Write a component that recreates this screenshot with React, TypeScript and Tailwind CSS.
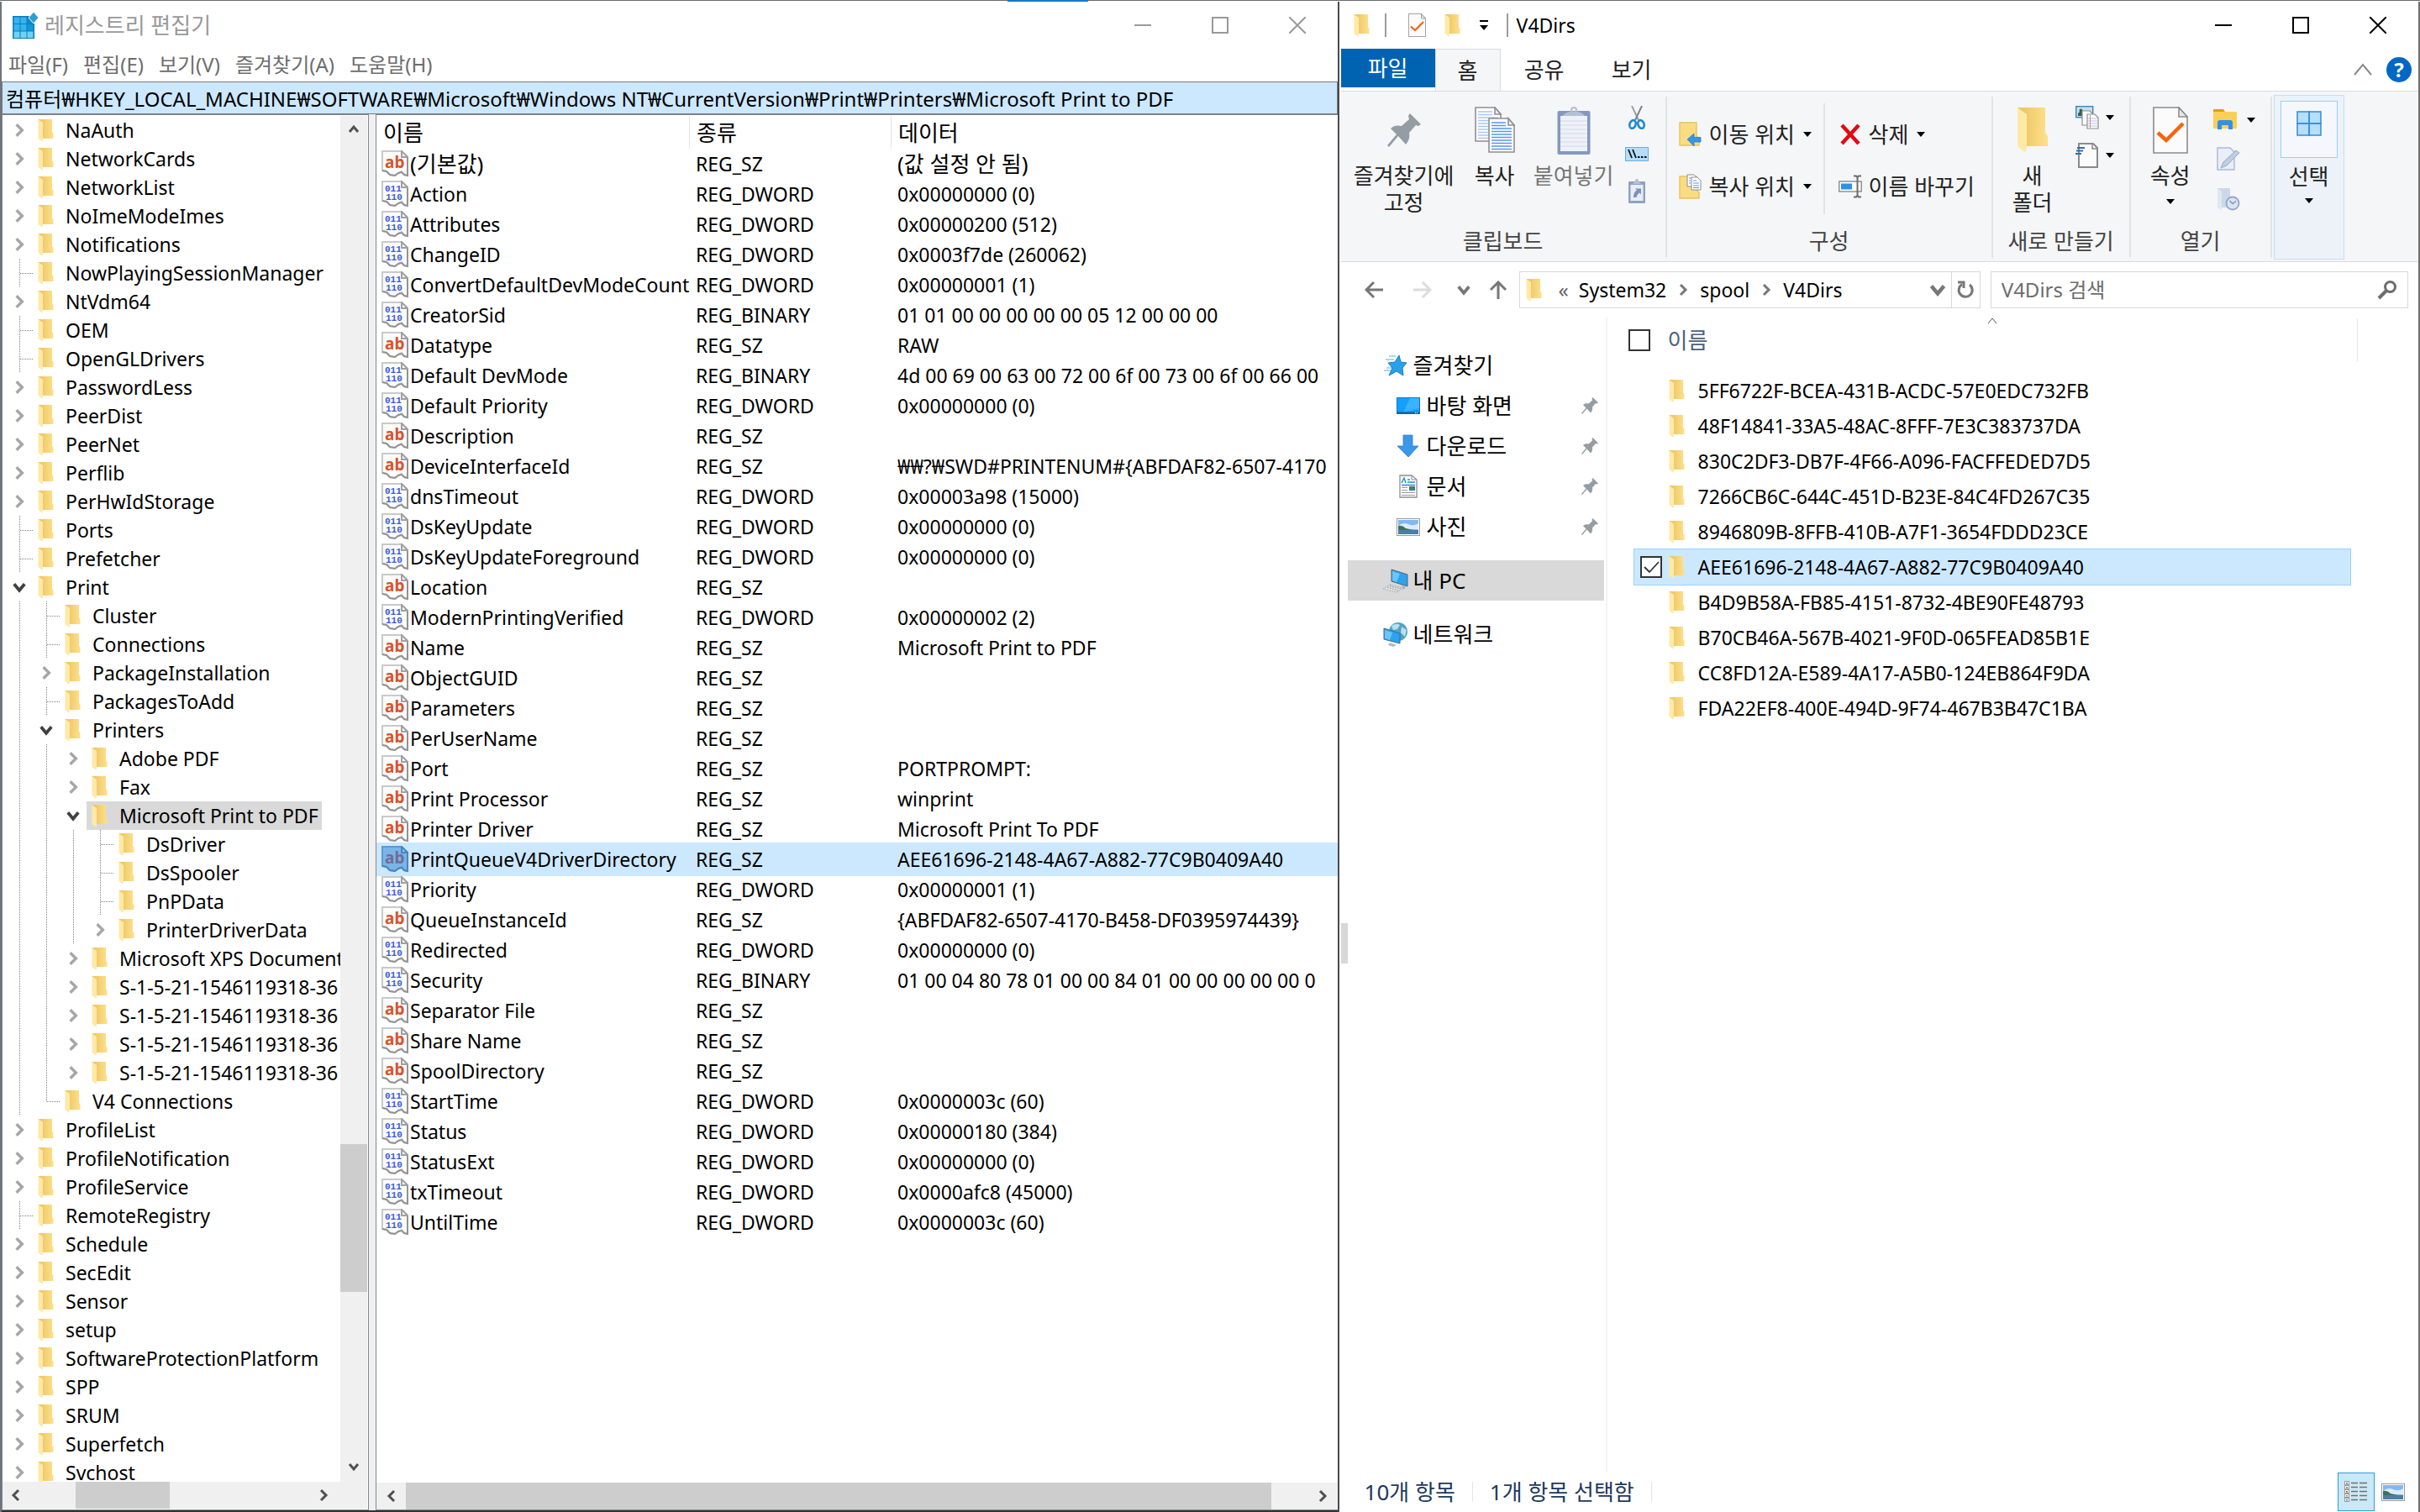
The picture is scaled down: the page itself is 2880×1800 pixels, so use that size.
import React from "react";

/* ---------- shared glyphs ---------- */

const FolderIcon = ({ className = "w-[19px] h-[27px]" }: { className?: string }) => (
  <svg viewBox="0 0 38 54" className={"shrink-0 " + className} aria-hidden="true" preserveAspectRatio="none">
    <defs>
      <linearGradient id="fold" x1="0" y1="0" x2="1" y2="0">
        <stop offset="0" stopColor="#e9c25f" />
        <stop offset="1" stopColor="#ffe08a" />
      </linearGradient>
    </defs>
    <path d="M1 0H34V30L37 34V46H12L4 8Z" fill="url(#fold)" />
    <path d="M1 0L12 8V46L11 54L1 46Z" fill="#ffe9a6" />
  </svg>
);

const Caret = ({ className = "" }: { className?: string }) => (
  <svg viewBox="0 0 10 6" className={"w-2.5 h-1.5 shrink-0 " + className} aria-hidden="true">
    <path d="M0 0H10L5 6Z" fill="#000" />
  </svg>
);

const Chevron = ({ dir, className = "w-4 h-4", color = "#505050", w = 3 }: { dir: "up" | "down" | "left" | "right"; className?: string; color?: string; w?: number }) => {
  const d = {
    up: "M3 11L8 5L13 11",
    down: "M3 5L8 11L13 5",
    left: "M11 2L5 8L11 14",
    right: "M5 2L11 8L5 14",
  }[dir];
  return (
    <svg viewBox="0 0 16 16" className={"shrink-0 " + className} aria-hidden="true">
      <path d={d} fill="none" stroke={color} strokeWidth={w} />
    </svg>
  );
};

const PinIcon = ({ className }: { className: string }) => (
  <svg viewBox="0 0 40 40" className={"shrink-0 " + className} aria-hidden="true">
    <path d="M27 0L40 13L37 15L34 14L26 23C27 28 26 32 22 37L13 27L2 40L0 38L11 25L4 18C8 14 12 14 17 15L26 7L25 3Z" fill="#949da3" />
  </svg>
);

const WindowButtons = ({ color }: { color: string }) => (
  <div className="flex items-center pr-0.5">
    {[
      ["최소화", <path key="a" d="M0 10H20" />],
      ["최대화", <path key="b" d="M1 1H19V19H1Z" />],
      ["닫기", <path key="c" d="M0 0L20 20M20 0L0 20" />],
    ].map(([label, shape]) => (
      <button key={label as string} aria-label={label as string} className="flex h-14 w-[92px] items-center justify-center">
        <svg viewBox="0 0 20 20" className="h-5 w-5" fill="none" stroke={color} strokeWidth={2}>
          {shape}
        </svg>
      </button>
    ))}
  </div>
);

/* ---------- registry editor ---------- */

type Node = { n: string; d: number; s: "+" | "-" | ""; last?: boolean };

const tree: Node[] = [
  { n: "NaAuth", d: 0, s: "+" },
  { n: "NetworkCards", d: 0, s: "+" },
  { n: "NetworkList", d: 0, s: "+" },
  { n: "NoImeModeImes", d: 0, s: "+" },
  { n: "Notifications", d: 0, s: "+" },
  { n: "NowPlayingSessionManager", d: 0, s: "" },
  { n: "NtVdm64", d: 0, s: "+" },
  { n: "OEM", d: 0, s: "" },
  { n: "OpenGLDrivers", d: 0, s: "" },
  { n: "PasswordLess", d: 0, s: "+" },
  { n: "PeerDist", d: 0, s: "+" },
  { n: "PeerNet", d: 0, s: "+" },
  { n: "Perflib", d: 0, s: "+" },
  { n: "PerHwIdStorage", d: 0, s: "+" },
  { n: "Ports", d: 0, s: "" },
  { n: "Prefetcher", d: 0, s: "" },
  { n: "Print", d: 0, s: "-" },
  { n: "Cluster", d: 1, s: "" },
  { n: "Connections", d: 1, s: "" },
  { n: "PackageInstallation", d: 1, s: "+" },
  { n: "PackagesToAdd", d: 1, s: "" },
  { n: "Printers", d: 1, s: "-" },
  { n: "Adobe PDF", d: 2, s: "+" },
  { n: "Fax", d: 2, s: "+" },
  { n: "Microsoft Print to PDF", d: 2, s: "-" },
  { n: "DsDriver", d: 3, s: "" },
  { n: "DsSpooler", d: 3, s: "" },
  { n: "PnPData", d: 3, s: "" },
  { n: "PrinterDriverData", d: 3, s: "+", last: true },
  { n: "Microsoft XPS Document", d: 2, s: "+" },
  { n: "S-1-5-21-1546119318-36", d: 2, s: "+" },
  { n: "S-1-5-21-1546119318-36", d: 2, s: "+" },
  { n: "S-1-5-21-1546119318-36", d: 2, s: "+" },
  { n: "S-1-5-21-1546119318-36", d: 2, s: "+", last: true },
  { n: "V4 Connections", d: 1, s: "", last: true },
  { n: "ProfileList", d: 0, s: "+" },
  { n: "ProfileNotification", d: 0, s: "+" },
  { n: "ProfileService", d: 0, s: "+" },
  { n: "RemoteRegistry", d: 0, s: "" },
  { n: "Schedule", d: 0, s: "+" },
  { n: "SecEdit", d: 0, s: "+" },
  { n: "Sensor", d: 0, s: "+" },
  { n: "setup", d: 0, s: "+" },
  { n: "SoftwareProtectionPlatform", d: 0, s: "+" },
  { n: "SPP", d: 0, s: "+" },
  { n: "SRUM", d: 0, s: "+" },
  { n: "Superfetch", d: 0, s: "+" },
  { n: "Svchost", d: 0, s: "+" },
];

const TreeGuide = ({ end, branch }: { end?: boolean; branch?: boolean }) => (
  <svg viewBox="0 0 32 34" className="h-[34px] w-8 shrink-0" aria-hidden="true">
    <path d={end ? "M16.5 0V17" : "M16.5 0V34"} stroke="#808080" strokeDasharray="1 1" fill="none" />
    {branch && <path d="M17 17.5H32" stroke="#808080" strokeDasharray="1 1" fill="none" />}
  </svg>
);

const TreeRow = ({ node }: { node: Node }) => {
  const selected = node.n === "Microsoft Print to PDF";
  return (
    <li className="flex h-[34px] shrink-0 items-center pl-1">
      {Array.from({ length: node.d }, (_, i) => (
        <TreeGuide key={i} />
      ))}
      {node.s === "" ? (
        <TreeGuide end={node.last} branch />
      ) : (
        <button aria-label={node.n + (node.s === "+" ? " 펼치기" : " 접기")} className="flex h-[34px] w-8 shrink-0 items-center justify-center">
          {node.s === "+" ? (
            <Chevron dir="right" className="h-[18px] w-[18px]" color="#a6a6a6" w={3} />
          ) : (
            <Chevron dir="down" className="h-[20px] w-[20px]" color="#404040" w={3} />
          )}
        </button>
      )}
      <div className={"flex h-[34px] items-center gap-3.5 pl-1.5 pr-1 " + (selected ? "bg-[#d9d9d9]" : "")}>
        <FolderIcon />
        <span className="whitespace-nowrap">{node.n}</span>
      </div>
    </li>
  );
};

const SZ = "REG_SZ";
const DW = "REG_DWORD";
const BN = "REG_BINARY";
const values: [string, string, string][] = [
  ["(기본값)", SZ, "(값 설정 안 됨)"],
  ["Action", DW, "0x00000000 (0)"],
  ["Attributes", DW, "0x00000200 (512)"],
  ["ChangeID", DW, "0x0003f7de (260062)"],
  ["ConvertDefaultDevModeCount", DW, "0x00000001 (1)"],
  ["CreatorSid", BN, "01 01 00 00 00 00 00 05 12 00 00 00"],
  ["Datatype", SZ, "RAW"],
  ["Default DevMode", BN, "4d 00 69 00 63 00 72 00 6f 00 73 00 6f 00 66 00"],
  ["Default Priority", DW, "0x00000000 (0)"],
  ["Description", SZ, ""],
  ["DeviceInterfaceId", SZ, "₩₩?₩SWD#PRINTENUM#{ABFDAF82-6507-4170"],
  ["dnsTimeout", DW, "0x00003a98 (15000)"],
  ["DsKeyUpdate", DW, "0x00000000 (0)"],
  ["DsKeyUpdateForeground", DW, "0x00000000 (0)"],
  ["Location", SZ, ""],
  ["ModernPrintingVerified", DW, "0x00000002 (2)"],
  ["Name", SZ, "Microsoft Print to PDF"],
  ["ObjectGUID", SZ, ""],
  ["Parameters", SZ, ""],
  ["PerUserName", SZ, ""],
  ["Port", SZ, "PORTPROMPT:"],
  ["Print Processor", SZ, "winprint"],
  ["Printer Driver", SZ, "Microsoft Print To PDF"],
  ["PrintQueueV4DriverDirectory", SZ, "AEE61696-2148-4A67-A882-77C9B0409A40"],
  ["Priority", DW, "0x00000001 (1)"],
  ["QueueInstanceId", SZ, "{ABFDAF82-6507-4170-B458-DF0395974439}"],
  ["Redirected", DW, "0x00000000 (0)"],
  ["Security", BN, "01 00 04 80 78 01 00 00 84 01 00 00 00 00 00 0"],
  ["Separator File", SZ, ""],
  ["Share Name", SZ, ""],
  ["SpoolDirectory", SZ, ""],
  ["StartTime", DW, "0x0000003c (60)"],
  ["Status", DW, "0x00000180 (384)"],
  ["StatusExt", DW, "0x00000000 (0)"],
  ["txTimeout", DW, "0x0000afc8 (45000)"],
  ["UntilTime", DW, "0x0000003c (60)"],
];

const ValueIcon = ({ text, selected }: { text: boolean; selected: boolean }) => (
  <svg viewBox="0 0 32 32" className="h-8 w-8 shrink-0" aria-hidden="true">
    <path
      d="M1 1H24L31 8V30L27 29L24 25L20 27L16 30L10 29L6 25L1 24Z"
      fill={selected ? "#7ab5e8" : "#fcfcfc"}
      stroke={selected ? "#5b9bd0" : "#c9c9c9"}
      strokeWidth="2"
    />
    <path d="M31 8V30L27 29L24 26L20 27L16 30L10 29L6 25L1 24" fill="none" stroke={selected ? "#4a86bd" : "#939393"} strokeWidth="2" />
    <path d="M24 1V8H31Z" fill={selected ? "#8cc2ee" : "#fff"} stroke={selected ? "#4a86bd" : "#a0a0a0"} strokeWidth="2" />
    {text ? (
      <text x="4" y="21" fontSize="19" fontWeight="700" fontFamily="Noto Sans, sans-serif" fill={selected ? "#6f6d93" : "#d9532c"}>
        ab
      </text>
    ) : (
      <g fontFamily="Liberation Mono, monospace" fontSize="11" fontWeight="700" fill="#3a5bd9">
        <text x="4" y="13">011</text>
        <text x="5" y="23">110</text>
      </g>
    )}
  </svg>
);

const RegIcon = () => (
  <svg viewBox="0 0 32 32" className="h-8 w-8 shrink-0" aria-hidden="true">
    <rect x="0" y="5" width="26" height="27" fill="#0c7bb8" />
    {[0, 1, 2].map((r) =>
      [0, 1, 2].map((c) => (
        <rect key={r + "-" + c} x={1.5 + c * 8} y={6.5 + r * 8.5} width="7" height="7.5" fill={r === 0 && c === 2 ? "#1489c4" : r === 2 ? "#6fd0f7" : c === 2 ? "#0f9ad8" : "#35b3ee"} />
      )),
    )}
    <path d="M25 0L31 7L25 14L19 7Z" fill="#2f9fd2" stroke="#fff" strokeWidth="1" />
  </svg>
);

const RegistryEditor = () => (
  <section className="flex min-w-0 flex-[1594] flex-col border-l-2 border-r-2 border-l-[#6f747c] border-r-[#4a4a50] bg-white">
    <header className="flex h-[55px] shrink-0 items-center pl-[13px]">
      <RegIcon />
      <h1 className="ml-1.5 flex-1 text-[26px] text-[#999]">레지스트리 편집기</h1>
      <WindowButtons color="#999999" />
    </header>
    <nav className="flex h-10 shrink-0 items-center gap-[18px] px-2 text-[24px] text-[#6d6d6d]">
      {["파일(F)", "편집(E)", "보기(V)", "즐겨찾기(A)", "도움말(H)"].map((m) => (
        <button key={m}>{m}</button>
      ))}
    </nav>
    <input
      aria-label="주소"
      readOnly
      className="h-[39px] shrink-0 border border-[#7a7a7a] bg-[#cce8ff] px-1 text-[24px] outline-none"
      value="컴퓨터₩HKEY_LOCAL_MACHINE₩SOFTWARE₩Microsoft₩Windows NT₩CurrentVersion₩Print₩Printers₩Microsoft Print to PDF"
    />
    <div className="flex min-h-0 flex-1 gap-2 bg-[#f0f0f0]">
      {/* key tree */}
      <div className="flex w-[437px] shrink-0 flex-col border border-[#828790] bg-white pb-px pr-px pt-px">
        <div className="flex min-h-0 flex-1">
          <ul className="flex min-w-0 flex-1 flex-col overflow-hidden">
            {tree.map((t, i) => (
              <TreeRow key={i} node={t} />
            ))}
          </ul>
          <div className="flex w-8 shrink-0 flex-col items-center justify-between bg-[#f0f0f0]">
            <button aria-label="위로" className="flex h-8 w-8 items-center justify-center">
              <Chevron dir="up" />
            </button>
            <div className="flex w-full flex-1 flex-col">
              <div className="flex-[1194]" />
              <div className="flex-[176] bg-[#cdcdcd]" />
              <div className="flex-[190]" />
            </div>
            <button aria-label="아래로" className="flex h-9 w-8 items-center justify-center">
              <Chevron dir="down" />
            </button>
          </div>
        </div>
        <div className="flex h-8 shrink-0 bg-[#f0f0f0] pr-9">
          <button aria-label="왼쪽으로" className="flex h-8 w-8 items-center justify-center">
            <Chevron dir="left" />
          </button>
          <div className="flex flex-1">
            <div className="flex-[55]" />
            <div className="flex-[112] bg-[#cdcdcd]" />
            <div className="flex-[168]" />
          </div>
          <button aria-label="오른쪽으로" className="flex h-8 w-8 items-center justify-center">
            <Chevron dir="right" />
          </button>
        </div>
      </div>
      {/* value list */}
      <div className="flex min-w-0 flex-1 flex-col border-y border-l border-[#828790] bg-white pt-px">
        <div className="min-h-0 flex-1 overflow-hidden">
          <table className="w-full table-fixed border-separate border-spacing-0 text-left">
            <colgroup>
              <col className="w-[373px]" />
              <col className="w-[240px]" />
              <col />
            </colgroup>
            <thead>
              <tr className="h-[39px] text-[26px]">
                <th className="border-r border-[#e5e5e5] py-0 pl-2 font-normal">이름</th>
                <th className="border-r border-[#e5e5e5] py-0 pl-2 font-normal">종류</th>
                <th className="py-0 pl-2 font-normal">데이터</th>
              </tr>
            </thead>
            <tbody>
              {values.map(([name, type, data], i) => {
                const sel = name === "PrintQueueV4DriverDirectory";
                const bg = sel ? "bg-[#cce8ff] shadow-[0_2px_0_#cce8ff,0_-2px_0_#cce8ff]" : "";
                const ko = i === 0 ? "text-[26px]" : "";
                return (
                  <tr key={name} className="h-9">
                    <td className={"p-0 " + bg}>
                      <div className="flex h-9 items-center whitespace-nowrap pl-1.5">
                        <ValueIcon text={type === SZ} selected={sel} />
                        <span className={"ml-0.5 " + ko}>{name}</span>
                      </div>
                    </td>
                    <td className={"p-0 pl-[7px] " + bg}>{type}</td>
                    <td className={"overflow-hidden whitespace-nowrap p-0 pl-[7px] " + bg + ko}>{data}</td>
                  </tr>
                );
              })}
            </tbody>
          </table>
        </div>
        <div className="flex h-8 shrink-0 bg-[#f0f0f0]">
          <button aria-label="왼쪽으로" className="flex h-8 w-[35px] items-center justify-center">
            <Chevron dir="left" />
          </button>
          <div className="flex flex-1">
            <div className="flex-[1029] bg-[#cdcdcd]" />
            <div className="flex-[43]" />
          </div>
          <button aria-label="오른쪽으로" className="flex h-8 w-9 items-center justify-center">
            <Chevron dir="right" />
          </button>
        </div>
      </div>
    </div>
    <div className="h-0.5 shrink-0 bg-[#333]" />
  </section>
);

/* ---------- explorer icons ---------- */

const PropsIcon = ({ className }: { className: string }) => (
  <svg viewBox="0 0 42 56" className={"shrink-0 " + className} aria-hidden="true">
    <path d="M1 1H31L41 12V55H1Z" fill="#fbfbfb" stroke="#8c8c8c" strokeWidth="1.6" />
    <path d="M31 1V12H41Z" fill="#e8e8e8" stroke="#8c8c8c" strokeWidth="1.6" />
    <path d="M6 31L16 40L36 20" fill="none" stroke="#f7630c" strokeWidth="4.5" />
  </svg>
);

const Page = ({ x, y, faded }: { x: number; y: number; faded?: boolean }) => (
  <g transform={`translate(${x} ${y})`}>
    <path d="M1 1H24L31 9V41H1Z" fill="#fff" stroke="#8f8f8f" strokeWidth="1.6" />
    <path d="M24 1V9H31Z" fill="#eee" stroke="#8f8f8f" strokeWidth="1.6" />
    <path
      d="M4 6H21M4 9.5H21M4 13H28M4 16.5H28M4 20H28M4 23.5H28M4 27H28M4 30.5H28M4 34H28M4 37.5H28"
      stroke={faded ? "#a9c6f5" : "#5a94ee"}
      strokeWidth="1.5"
    />
  </g>
);

const CopyIcon = () => (
  <svg viewBox="0 0 48 56" className="h-14 w-12" aria-hidden="true">
    <Page x={0} y={0} faded />
    <Page x={16} y={13} />
  </svg>
);

const PasteIcon = () => (
  <svg viewBox="0 0 40 57" className="h-[57px] w-10" aria-hidden="true">
    <rect x="0.5" y="5" width="39" height="52" rx="2" fill="#8498bd" />
    <rect x="4" y="11" width="32" height="42" fill="#eef1f8" />
    <path d="M4 17H36M4 22H36M4 27H36M4 32H36M4 37H36M4 42H36M4 47H36" stroke="#d2d9e8" strokeWidth="1.2" />
    <path d="M7 11C9 7 13 7 15 6H25C27 7 31 7 33 11Z" fill="#b4bfd6" />
    <circle cx="20" cy="4" r="3" fill="none" stroke="#b4bfd6" strokeWidth="2" />
  </svg>
);

const ScissorsIcon = () => (
  <svg viewBox="0 0 20 28" className="h-7 w-5" aria-hidden="true" fill="none">
    <path d="M4 0L12 17" stroke="#9a9fa3" strokeWidth="2" />
    <path d="M16 0L8 17" stroke="#7e8386" strokeWidth="2" />
    <ellipse cx="5" cy="22" rx="3.5" ry="5" stroke="#1e8ad0" strokeWidth="2.6" transform="rotate(20 5 22)" />
    <ellipse cx="15" cy="22" rx="3.5" ry="5" stroke="#1e8ad0" strokeWidth="2.6" transform="rotate(-20 15 22)" />
  </svg>
);

const CopyPathIcon = () => (
  <svg viewBox="0 0 28 17" className="h-[17px] w-7" aria-hidden="true">
    <rect x="0.5" y="0.5" width="27" height="16" fill="#b5ddfb" stroke="#6ab0dd" />
    <path d="M4 3L8 13M9 3L13 13" stroke="#111" strokeWidth="1.8" />
    <path d="M15 12H17.500M19 12H21.500M23 12H25.500" stroke="#111" strokeWidth="2.200" />
  </svg>
);

const PasteShortcutIcon = () => (
  <svg viewBox="0 0 20 29" className="h-[29px] w-5" aria-hidden="true">
    <rect x="0" y="3" width="20" height="26" rx="1" fill="#8fa1c4" />
    <rect x="2.500" y="7" width="15" height="19" fill="#e8edf6" />
    <path d="M5 6C6 4 8 3 8 2A2 2 0 0 1 12 2C12 3 14 4 15 6Z" fill="#b4bfd6" />
    <path d="M6 22C6 17 8 14.500 10 13.500L8 11.500H15V18.500L13 16.500C11 18 10 20 9.500 22Z" fill="#7c92bd" />
  </svg>
);

const MoveToIcon = () => (
  <svg viewBox="0 0 28 30" className="h-[30px] w-7 shrink-0" aria-hidden="true">
    <path d="M1 1H21V17L24 20V28H1Z" fill="#fbdc82" stroke="#e6c35c" strokeWidth="1.400" />
    <path d="M10 21L18 14V18.500H26V24H18V29Z" fill="#3795e5" stroke="#2a7fc9" strokeWidth="0.800" />
  </svg>
);

const CopyToIcon = () => (
  <svg viewBox="0 0 28 30" className="h-[30px] w-7 shrink-0" aria-hidden="true">
    <path d="M1 3H21V19L24 22V29H1Z" fill="#fbdc82" stroke="#e6c35c" strokeWidth="1.400" />
    <path d="M10 1H18L21 4V15H10Z" fill="#fff" stroke="#8c8c8c" />
    <path d="M15 4H22L26 8V19H15Z" fill="#fff" stroke="#8c8c8c" />
    <path d="M12 5H15M12 8H14M12 11H14M17 8H21M17 11H24M17 14H24M17 16.500H24" stroke="#5a94ee" />
  </svg>
);

const DeleteIcon = () => (
  <svg viewBox="0 0 28 28" className="h-7 w-7 shrink-0" aria-hidden="true">
    <path d="M4 3L24 25M24 3L4 25" stroke="#e00b14" strokeWidth="4.500" />
  </svg>
);

const RenameIcon = () => (
  <svg viewBox="0 0 28 28" className="h-7 w-7 shrink-0" aria-hidden="true">
    <rect x="0.700" y="8" width="26.500" height="12" fill="#fff" stroke="#8a8a8a" strokeWidth="1.400" />
    <rect x="3" y="10.500" width="13" height="7" fill="#2f91e6" />
    <path d="M18 1.500H21L22.500 3L24 1.500H27M22.500 3V25M18 26.500H21L22.500 25L24 26.500H27" fill="none" stroke="#6a6a6a" strokeWidth="2" />
  </svg>
);

const NewItemIcon = () => (
  <svg viewBox="0 0 28 28" className="h-7 w-7 shrink-0" aria-hidden="true">
    <rect x="0.700" y="0.700" width="20" height="13" fill="#bfe0f5" stroke="#3a88b5" strokeWidth="1.400" />
    <path d="M3 12V9L5 7A2 2 0 1 1 8 7L10 9V12Z" fill="#3d5a45" />
    <path d="M8 6H17L20 9V23H8Z" fill="#fff" stroke="#8c8c8c" strokeWidth="1.200" />
    <path d="M14 10H23L27 14V27H14Z" fill="#fff" stroke="#8c8c8c" strokeWidth="1.200" />
    <path d="M15 15H26M15 18H26M15 21H26M15 24H26" stroke="#a8c6ee" />
    <path d="M17.500 11V26" stroke="#ef7d7d" />
  </svg>
);

const EasyAccessIcon = () => (
  <svg viewBox="0 0 28 30" className="h-[30px] w-7 shrink-0" aria-hidden="true">
    <path d="M4 1H21L26 6V29H4Z" fill="#fbfbfb" stroke="#8a8a8a" strokeWidth="2" />
    <path d="M20 1V7H26" fill="none" stroke="#8a8a8a" strokeWidth="1.500" />
    <path d="M2 6H11M1 9.500H9M0 13H7" stroke="#2f6fb5" strokeWidth="2" />
  </svg>
);

const OpenIcon = () => (
  <svg viewBox="0 0 28 25" className="h-[25px] w-7 shrink-0" aria-hidden="true">
    <path d="M0 0H12L14 3H0Z" fill="#dda012" />
    <path d="M0 3H28V23H0Z" fill="#fbcf57" />
    <path d="M5 24V16Q5 13 8 13H20Q23 13 23 16V24H18V19H10V24Z" fill="#3191e4" />
  </svg>
);

const EditIcon = () => (
  <svg viewBox="0 0 28 28" className="h-7 w-7 shrink-0" aria-hidden="true">
    <path d="M1 1H16L21 6V27H1Z" fill="#e9eef8" stroke="#a9b9d6" strokeWidth="1.400" />
    <path d="M5 25L8 18L23 4L27 7L12 22Z" fill="#c0cce2" stroke="#97a8ca" />
  </svg>
);

const HistoryIcon = () => (
  <svg viewBox="0 0 28 28" className="h-7 w-7 shrink-0" aria-hidden="true">
    <path d="M1 1H16V24H6Z" fill="#ccd7ea" />
    <path d="M1 1L6 5V27L1 24Z" fill="#e0e7f3" />
    <circle cx="19" cy="19" r="7.500" fill="#dbe3f1" stroke="#93a6c9" strokeWidth="1.800" />
    <path d="M15.500 16L19 19.500L23 16.500" fill="none" stroke="#7f94bd" strokeWidth="1.500" />
  </svg>
);

const SelectIcon = () => (
  <svg viewBox="0 0 30 30" className="h-[30px] w-[30px]" aria-hidden="true">
    <rect x="1" y="1" width="28" height="28" fill="#b5dffc" stroke="#3d92d4" strokeWidth="1.600" />
    <path d="M15 0V30M0 15H30" stroke="#3d92d4" strokeWidth="2" />
  </svg>
);

const PictureIcon = () => (
  <svg viewBox="0 0 28 21" className="h-[21px] w-7 shrink-0" aria-hidden="true">
    <rect x="0.500" y="0.500" width="27" height="20" fill="#fff" stroke="#9a9a9a" />
    <rect x="2" y="2" width="24" height="17" fill="#7fb9f5" />
    <path d="M2 9Q8 4 14 7T26 6V13H2Z" fill="#dcecf9" />
    <path d="M2 9Q7 8 11 12L20 14H2Z" fill="#3f7257" />
    <rect x="2" y="14" width="24" height="5" fill="#4a7fa6" />
  </svg>
);

const StarIcon = () => (
  <svg viewBox="0 0 30 30" className="h-[30px] w-[30px] shrink-0" aria-hidden="true">
    <path d="M7 4H15M3 8H13M4 18H10M1 21H9" stroke="#8cc9ee" strokeWidth="1.400" />
    <path d="M19 3L21 11L28 12L23 18L24 27L16 22L7 27L11 18L6 12L14 11Z" fill="#2aa0ec" stroke="#1580c8" />
  </svg>
);

const DesktopIcon = () => (
  <svg viewBox="0 0 28 20" className="h-5 w-7 shrink-0" aria-hidden="true">
    <rect x="0.500" y="0.500" width="27" height="19" fill="#12a0fc" stroke="#0e77c2" />
    <path d="M27 1V13L8 18L16 1Z" fill="#3bb2ff" />
    <path d="M1 18.500H27" stroke="#0b5fa5" strokeWidth="2" />
    <path d="M22 18.500H26" stroke="#fff" strokeDasharray="1 1" />
  </svg>
);

const DownloadIcon = () => (
  <svg viewBox="0 0 28 28" className="h-7 w-7 shrink-0" aria-hidden="true">
    <path d="M8 1H19V14H26L14 27L1 14H8Z" fill="#3b97e8" stroke="#2f80ca" strokeWidth="0.800" />
  </svg>
);

const DocIcon = () => (
  <svg viewBox="0 0 28 28" className="h-7 w-7 shrink-0" aria-hidden="true">
    <path d="M4 1H18L24 6V27H4Z" fill="#fff" stroke="#8f8f8f" strokeWidth="1.300" />
    <path d="M18 1V6H24" fill="none" stroke="#8f8f8f" />
    <path d="M6 10L9 4L11 10M13 6H16M13 9H22M6 12.500H22" fill="none" stroke="#1e8fd5" strokeWidth="1.400" />
    <path d="M6 15.500H13M6 18.500H13M6 21.500H22M6 24.500H22" stroke="#9a9a9a" />
    <rect x="15" y="14" width="7" height="5" fill="#3c7d8e" />
  </svg>
);

const PcIcon = () => (
  <svg viewBox="0 0 30 30" className="h-[30px] w-[30px] shrink-0" aria-hidden="true">
    <path d="M10 2L29 8V22L10 16Z" fill="#2ba4f0" stroke="#4d6478" />
    <path d="M11 4L20 7L16 17L11 15Z" fill="#6cc5fa" />
    <path d="M8 20L24 24L16 29L0 25Z" fill="#dfe3e6" stroke="#a7acb0" strokeDasharray="2 1" />
    <path d="M5 23L18 27M8 21.500L21 25" stroke="#8f9499" strokeDasharray="2 1" />
    <path d="M22 21L27 23L24 26Z" fill="#aab0b5" />
  </svg>
);

const NetIcon = () => (
  <svg viewBox="0 0 30 30" className="h-[30px] w-[30px] shrink-0" aria-hidden="true">
    <circle cx="18" cy="12" r="11" fill="#4fa3c9" />
    <path d="M10 5Q16 1 20 4L17 9L12 10ZM22 6L28 10L26 18L21 13Z" fill="#b9dfee" />
    <path d="M1 8L20 14V26L1 21Z" fill="#2ba4f0" stroke="#3d6b8c" />
    <path d="M2 10L11 13L8 22L2 20Z" fill="#6cc5fa" />
    <path d="M8 25L16 28L12 30L6 28Z" fill="#b4b9bd" />
  </svg>
);

/* ---------- explorer ---------- */

const Sep = ({ className = "my-0.5" }: { className?: string }) => <div className={"w-0.5 shrink-0 bg-[#e2e3e4] " + className} />;

const BigButton = ({ icon, lines, className = "", caret, muted }: { icon: React.ReactNode; lines: string[]; className?: string; caret?: boolean; muted?: boolean }) => (
  <button className={"flex shrink-0 flex-col items-center pt-3 " + className}>
    <span className="flex h-[60px] items-center justify-center">{icon}</span>
    <span className={"mt-2 flex flex-col whitespace-nowrap leading-8 " + (muted ? "text-[#767676]" : "text-[#222]")}>
      {lines.map((l) => (
        <span key={l}>{l}</span>
      ))}
    </span>
    {caret && <Caret className="mt-3" />}
  </button>
);

const Group = ({ label, width, children }: { label: string; width: string; children: React.ReactNode }) => (
  <div className={"flex shrink-0 flex-col " + width}>
    <div className="flex flex-1">{children}</div>
    <div className="h-[38px] text-center leading-8 text-[#444]">{label}</div>
  </div>
);

const SmallButton = ({ icon, text, caret }: { icon: React.ReactNode; text: string; caret?: boolean }) => (
  <button className="flex h-[62px] items-center whitespace-nowrap text-[#222]">
    {icon}
    <span className="ml-2">{text}</span>
    {caret && <Caret className="ml-2.5" />}
  </button>
);

const Ribbon = () => (
  <div className="flex h-[204px] shrink-0 border-y border-[#dadbdc] bg-[#f5f6f7] pb-0.5 pt-1 text-[26px]">
    <Group label="클립보드" width="w-[386px]">
      <BigButton className="ml-3 w-[126px]" icon={<PinIcon className="h-10 w-10" />} lines={["즐겨찾기에", "고정"]} />
      <BigButton className="w-[90px]" icon={<CopyIcon />} lines={["복사"]} />
      <BigButton className="w-[98px]" icon={<PasteIcon />} lines={["붙여넣기"]} muted />
      <div className="flex w-[52px] flex-col items-center gap-[21px] pt-[13px]">
        <button aria-label="잘라내기"><ScissorsIcon /></button>
        <button aria-label="경로 복사"><CopyPathIcon /></button>
        <button aria-label="바로 가기 붙여넣기"><PasteShortcutIcon /></button>
      </div>
    </Group>
    <Sep />
    <Group label="구성" width="w-[386px]">
      <div className="flex w-[186px] flex-col pl-3.5 pt-4">
        <SmallButton icon={<MoveToIcon />} text="이동 위치" caret />
        <SmallButton icon={<CopyToIcon />} text="복사 위치" caret />
      </div>
      <Sep className="mb-4 mt-2.5" />
      <div className="flex flex-col pl-4 pt-4">
        <SmallButton icon={<DeleteIcon />} text="삭제" caret />
        <SmallButton icon={<RenameIcon />} text="이름 바꾸기" />
      </div>
    </Group>
    <Sep />
    <Group label="새로 만들기" width="w-[162px]">
      <BigButton className="w-[94px]" icon={<FolderIcon className="h-[54px] w-[38px]" />} lines={["새", "폴더"]} />
      <div className="flex flex-col gap-4 pl-1 pt-[13px]">
        <button aria-label="새 항목" className="flex items-center gap-2"><NewItemIcon /><Caret /></button>
        <button aria-label="빠른 연결" className="flex items-center gap-2"><EasyAccessIcon /><Caret /></button>
      </div>
    </Group>
    <Sep />
    <Group label="열기" width="w-[166px]">
      <BigButton className="w-[94px]" icon={<PropsIcon className="h-14 w-[42px]" />} lines={["속성"]} caret />
      <div className="flex flex-col items-start gap-5 pl-1 pt-[17px]">
        <button aria-label="열기" className="flex items-center gap-3"><OpenIcon /><Caret /></button>
        <button aria-label="편집" className="pl-1"><EditIcon /></button>
        <button aria-label="히스토리" className="pl-1"><HistoryIcon /></button>
      </div>
    </Group>
    <Sep />
    <button className="ml-0.5 flex w-[84px] shrink-0 flex-col items-center border border-[#bfe0f7] bg-[#ecf2f7] pt-1.5">
      <span className="flex h-[68px] w-[68px] items-start justify-center border border-[#99cef8] bg-[#f4f8fc] pt-[11px]">
        <SelectIcon />
      </span>
      <span className="mt-1.5 leading-8 text-[#222]">선택</span>
      <Caret className="mt-2.5" />
    </button>
  </div>
);

const places: { n: string; icon: React.ReactNode }[] = [
  { n: "바탕 화면", icon: <DesktopIcon /> },
  { n: "다운로드", icon: <DownloadIcon /> },
  { n: "문서", icon: <DocIcon /> },
  { n: "사진", icon: <PictureIcon /> },
];

const folders = [
  "5FF6722F-BCEA-431B-ACDC-57E0EDC732FB",
  "48F14841-33A5-48AC-8FFF-7E3C383737DA",
  "830C2DF3-DB7F-4F66-A096-FACFFEDED7D5",
  "7266CB6C-644C-451D-B23E-84C4FD267C35",
  "8946809B-8FFB-410B-A7F1-3654FDDD23CE",
  "AEE61696-2148-4A67-A882-77C9B0409A40",
  "B4D9B58A-FB85-4151-8732-4BE90FE48793",
  "B70CB46A-567B-4021-9F0D-065FEAD85B1E",
  "CC8FD12A-E589-4A17-A5B0-124EB864F9DA",
  "FDA22EF8-400E-494D-9F74-467B3B47C1BA",
];

const Box = ({ label, checked }: { label: string; checked?: boolean }) => (
  <label className="relative flex h-[26px] w-[26px] shrink-0">
    <input
      type="checkbox"
      aria-label={label}
      defaultChecked={checked}
      className="h-[26px] w-[26px] appearance-none border-2 border-[#333] bg-white"
    />
    {checked && (
      <svg viewBox="0 0 26 26" className="pointer-events-none absolute inset-0" aria-hidden="true">
        <path d="M5 13L11 19L22 7" fill="none" stroke="#333" strokeWidth="1.800" />
      </svg>
    )}
  </label>
);

const Arrow = ({ d, color }: { d: string; color: string }) => (
  <svg viewBox="0 0 22 22" className="h-[22px] w-[22px]" fill="none" stroke={color} strokeWidth="3" aria-hidden="true">
    <path d={d} />
  </svg>
);

const Explorer = () => (
  <section className="flex min-w-0 flex-[1286] flex-col border-r-2 border-r-[#6f6f6f] bg-white pl-0.5">
    <header className="flex h-14 shrink-0 items-center pl-[15px]">
      <FolderIcon />
      <div className="ml-[18px] h-7 w-0.5 bg-[#9b9b9b]" />
      <button aria-label="속성" className="ml-[26px]"><PropsIcon className="h-7 w-[21px]" /></button>
      <button aria-label="새 폴더" className="ml-[22px]"><FolderIcon /></button>
      <button aria-label="빠른 실행 도구 모음 사용자 지정" className="ml-[23px] flex flex-col gap-1">
        <span className="h-0.5 w-2.5 bg-black" />
        <Caret />
      </button>
      <div className="ml-[22px] h-7 w-0.5 bg-[#9b9b9b]" />
      <h1 className="ml-2.5 flex-1">V4Dirs</h1>
      <WindowButtons color="#000000" />
    </header>
    <nav className="flex h-[50px] shrink-0 text-[26px] text-[#222]">
      <button className="mb-1 w-[112px] bg-[#0063b1] text-white">파일</button>
      <button className="-mb-px w-[78px] border border-b-0 border-[#dadbdc] bg-[#f5f6f7]">홈</button>
      <button className="w-[104px]">공유</button>
      <button className="w-[104px]">보기</button>
      <div className="flex flex-1 items-center justify-end gap-3 pr-2">
        <button aria-label="리본 최소화">
          <Chevron dir="up" className="h-8 w-8" color="#8a8a8a" w={1} />
        </button>
        <button aria-label="도움말" className="h-[30px] w-[30px] rounded-full bg-[#0067c5] text-[24px] font-bold leading-[30px] text-white">
          ?
        </button>
      </div>
    </nav>
    <Ribbon />
    <div className="flex h-[66px] shrink-0 items-center pl-7 pr-3">
      <button aria-label="뒤로"><Arrow d="M22 11H2M11 2L2 11L11 20" color="#777777" /></button>
      <button aria-label="앞으로" className="ml-9"><Arrow d="M0 11H20M11 2L20 11L11 20" color="#dcdcdc" /></button>
      <button aria-label="최근 위치" className="ml-7"><Chevron dir="down" color="#777777" className="h-5 w-5" /></button>
      <button aria-label="위로" className="ml-5"><Arrow d="M11 22V2M2 11L11 2L20 11" color="#777777" /></button>
      <div className="ml-3.5 flex h-11 flex-[541] items-center border border-[#d9d9d9] pl-[7px]">
        <FolderIcon />
        <span className="ml-5 text-[24px] leading-none text-[#666]">«</span>
        <a href="#system32" className="ml-3">System32</a>
        <Chevron dir="right" color="#777777" className="ml-3 h-4 w-4" />
        <a href="#spool" className="ml-3">spool</a>
        <Chevron dir="right" color="#777777" className="ml-3 h-4 w-4" />
        <a href="#v4dirs" className="ml-3">V4Dirs</a>
        <div className="flex-1" />
        <button aria-label="이전 위치" className="mr-1 flex h-full items-center">
          <Chevron dir="down" color="#777777" className="h-6 w-6" />
        </button>
        <button aria-label="새로 고침" className="flex h-full w-[34px] items-center justify-center border-l border-[#d9d9d9]">
          <svg viewBox="0 0 20 24" className="h-6 w-5" fill="none" stroke="#777" strokeWidth="3" aria-hidden="true">
            <path d="M15 6A8 8 0 1 1 6 5.500" />
            <path d="M1 3H8V10" />
          </svg>
        </button>
      </div>
      <div className="ml-3 flex h-11 flex-[472] items-center border border-[#d9d9d9] pl-3 pr-3">
        <input aria-label="검색" placeholder="V4Dirs 검색" className="min-w-0 flex-1 bg-transparent text-[24px] outline-none placeholder:text-[#6d6d6d]" />
        <svg viewBox="0 0 24 24" className="h-6 w-6" fill="none" stroke="#6d6d6d" aria-hidden="true">
          <circle cx="15.500" cy="8.500" r="6" strokeWidth="3" />
          <path d="M11 13L2 22" strokeWidth="4" />
        </svg>
      </div>
    </div>
    <div className="flex min-h-0 flex-1">
      <nav className="relative flex w-[317px] shrink-0 flex-col border-r-2 border-[#f2f2f2] pl-2 pr-0.5 pt-[33px] text-[26px]">
        <div className="absolute left-0 top-[721px] h-12 w-2 bg-[#d8d8d8]" />
        <a href="#quick" className="flex h-12 items-center pl-[42px]">
          <StarIcon />
          <span className="ml-1.5">즐겨찾기</span>
        </a>
        {places.map((p) => (
          <a key={p.n} href={"#" + p.n} className="flex h-12 items-center pl-[58px] pr-[7px]">
            {p.icon}
            <span className="ml-2 flex-1">{p.n}</span>
            <PinIcon className="h-5 w-5" />
          </a>
        ))}
        <a href="#pc" className="mt-4 flex h-12 items-center bg-[#d9d9d9] pl-[42px]">
          <PcIcon />
          <span className="ml-1.5">내 PC</span>
        </a>
        <a href="#network" className="mt-4 flex h-12 items-center pl-[42px]">
          <NetIcon />
          <span className="ml-1.5">네트워크</span>
        </a>
      </nav>
      <main className="min-w-0 flex-1 pl-[25px] pr-[72px] pt-px">
        <div className="relative flex h-[51px] items-center border-r border-[#e5e5e5]">
          <Box label="모두 선택" />
          <button className="ml-[21px] text-[26px] text-[#4c607a]">이름</button>
          <Chevron dir="up" className="absolute left-1/2 top-[-5px] -ml-2 h-4 w-4" color="#555555" w={1} />
        </div>
        <ul className="mt-3.5 pr-2">
          {folders.map((f) => {
            const sel = f.startsWith("AEE");
            return (
              <li key={f} className={"flex items-center " + (sel ? "-my-px ml-1.5 h-11 border border-[#99d1ff] bg-[#cce8ff] pl-[7px]" : "h-[42px] pl-10")}>
                {sel && <Box label={f} checked />}
                <FolderIcon className={"h-[27px] w-[19px] " + (sel ? "ml-2" : "ml-2")} />
                <span className="ml-4 whitespace-nowrap">{f}</span>
              </li>
            );
          })}
        </ul>
      </main>
    </div>
    <footer className="flex h-12 shrink-0 items-center bg-white pl-7 text-[26px] text-[#1e395b]">
      <span>10개 항목</span>
      <div className="ml-5 h-6 w-px bg-[#e5e5e5]" />
      <span className="ml-5">1개 항목 선택함</span>
      <div className="ml-5 h-6 w-px bg-[#e5e5e5]" />
      <div className="flex-1" />
      <button aria-label="자세히" className="flex h-[46px] w-11 items-center justify-center border border-[#26a0da] bg-[#cbe8f6]">
        <svg viewBox="0 0 28 26" className="h-[26px] w-7" aria-hidden="true">
          {[0, 1, 2, 3, 4].map((i) => (
            <g key={i}>
              <rect x="0.500" y={i * 5 + 0.500} width="5" height="4" fill="#fff" stroke="#999" />
              <rect x="2" y={i * 5 + 2} width="2" height="1.500" fill={["#4a6f9e", "#5a8a5a", "#c0392b", "#7aa05a", "#4a80c0"][i]} />
              <path d={`M8 ${i * 5 + 2.5}H16M18 ${i * 5 + 2.5}H27`} stroke="#707070" strokeWidth="1.400" />
            </g>
          ))}
        </svg>
      </button>
      <button aria-label="큰 아이콘" className="mx-2 mr-4"><PictureIcon /></button>
    </footer>
  </section>
);

export default function App() {
  return (
    <div className="flex h-screen w-full flex-col overflow-hidden bg-white font-['Noto_Sans','Noto_Sans_CJK_KR',sans-serif] text-[23px] leading-8 text-black">
      <div className="flex h-0.5 shrink-0">
        <div className="flex-[1199] border-t border-[#6b6b6b]" />
        <div className="flex-[96] bg-[#1979ca]" />
        <div className="flex-[1585] border-t border-[#6b6b6b]" />
      </div>
      <div className="flex min-h-0 flex-1">
        <RegistryEditor />
        <Explorer />
      </div>
    </div>
  );
}
